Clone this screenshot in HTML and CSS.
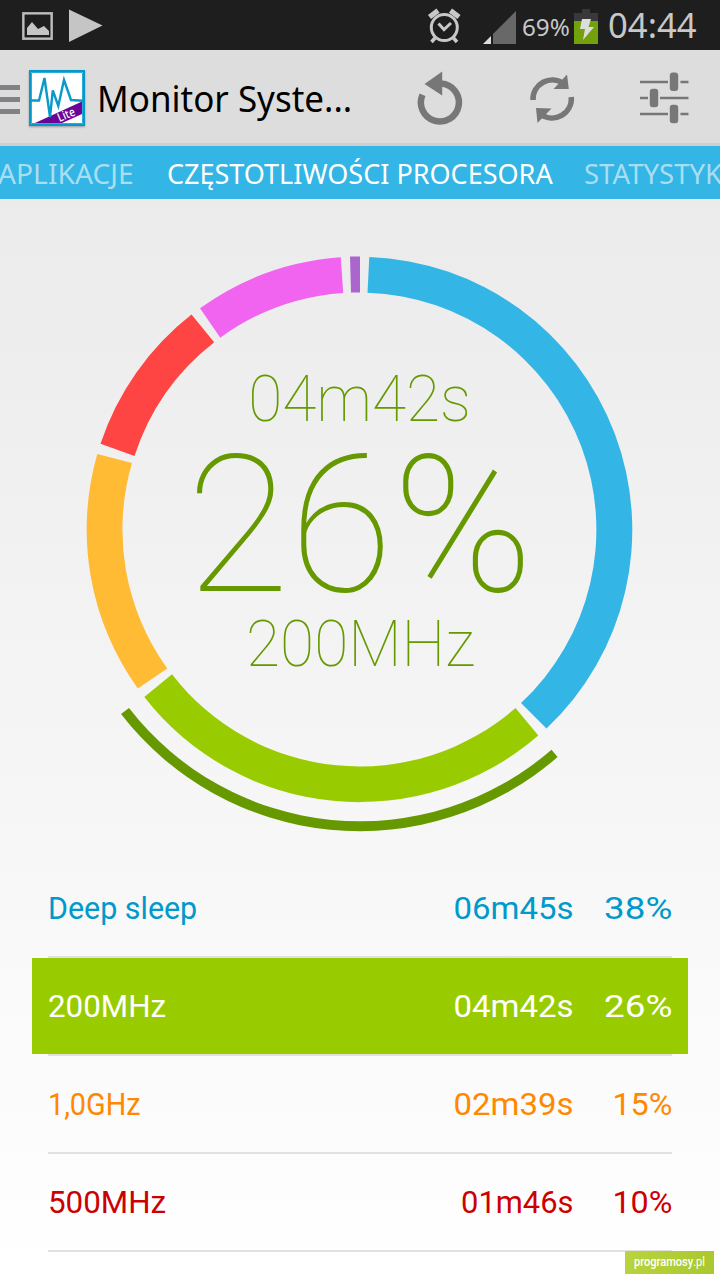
FILE: index.html
```html
<!DOCTYPE html>
<html lang="pl">
<head>
<meta charset="utf-8">
<title>Monitor Systemu</title>
<link rel="stylesheet" href="styles.css">
</head>
<body>
<div class="screen">
  <header class="status">
    <svg class="notices" width="110" height="50" viewBox="0 0 110 50">
      <rect x="23" y="13" width="29" height="26" fill="none" stroke="#aaa" stroke-width="2"/>
      <rect x="24" y="14" width="27" height="24" fill="none" stroke="#d0d0d0" stroke-width="1"/>
      <path d="M27 35V28l5-6 6 7 6-3 5 5v4z" fill="#c5c5c5"/>
      <path d="M69 9.500L102.500 25.500 69 42z" fill="#c5c5c5"/>
    </svg>
    <svg class="signals" width="92" height="50" viewBox="0 0 92 50">
      <g fill="none" stroke="#c8c8c8">
        <circle cx="17.300" cy="27.500" r="13" stroke-width="3"/>
        <path d="M11.500 23.500l5.500 6 7-6.500" stroke-width="3"/>
        <path d="M2.500 17l8.500-6.300M32 17l-8.500-6.300" stroke-width="5.200"/>
        <path d="M8 38l-3.500 4M26.500 38l3.500 4" stroke-width="3.500"/>
      </g>
      <path d="M56 44l8-8v8z" fill="#ddd"/>
      <path d="M66 44V34L89 11v33z" fill="#686868"/>
    </svg>
    <span class="percent"><span class="fit fit-percent">69%</span></span>
    <svg class="battery" width="24" height="50" viewBox="0 0 24 50">
      <path d="M0 13h8V9h8v4h8v8H0z" fill="#393939"/>
      <path d="M0 21h24v23H0z" fill="#73a10c"/>
      <path d="M8 19h9l-2.500 8H20L9 40l2-11H6z" fill="#ddd"/>
    </svg>
    <span class="clock"><span class="fit fit-clock">04:44</span></span>
  </header>

  <div class="actionbar">
    <svg width="20" height="93" viewBox="0 0 20 93"><path d="M0 35h20v5H0zM0 47h20v5H0zM0 59h20v5H0z" fill="#808286"/></svg>
    <svg class="logo" width="56" height="56" viewBox="0 0 56 56">
      <rect x="1" y="1" width="54" height="54" fill="#fff" stroke="#0798cb" stroke-width="2"/>
      <path d="M2.500 2.500h51v51h-51z" fill="none" stroke="#2bacdb" stroke-width="1"/>
      <path d="M6 53L53 31.500V44L33 53z" fill="#6a0496"/>
      <path d="M2 30.500h8L15.500 8l5.500 39 2.800-26.500L29.300 36 35 10l7 20 12 .700" fill="none" stroke="#079acb" stroke-width="2.400"/>
      <text class="lite" x="0" y="0" textLength="18" lengthAdjust="spacingAndGlyphs" transform="translate(30.500 52) rotate(-23)">Lite</text>
    </svg>
    <h1 class="title"><span class="fit fit-title">Monitor Syste...</span></h1>
    <svg class="actions" width="304" height="93" viewBox="416 50 304 93">
      <g fill="#777">
        <path d="M424.500 84L442.200 71.500V95.500z"/>
        <path d="M441 83.500A19 19 0 1 1 422.500 94.800" fill="none" stroke="#777" stroke-width="6.500"/>
        <path d="M533 100A19.300 19.300 0 0 1 563.500 83.500" fill="none" stroke="#777" stroke-width="5.500"/>
        <path d="M567 74.500l1.800 14.500H553.500z"/>
        <path d="M571.300 97A19.300 19.300 0 0 1 541 114.500" fill="none" stroke="#777" stroke-width="5.500"/>
        <path d="M536 108l15.500.500L537.500 123z"/>
        <path d="M640 80.700h28v2.600h-28zM680.500 80.700h8v2.600h-8zM640 96.700h8v2.600h-8zM660 96.700h28.500v2.600H660zM640 112.700h28v2.600h-28zM680.500 112.700h8v2.600h-8z"/>
        <rect x="669.800" y="72.500" width="8.400" height="18.500" rx="3"/>
        <rect x="649.800" y="88.700" width="8.400" height="18.500" rx="3"/>
        <rect x="669.800" y="104.800" width="8.400" height="18.500" rx="3"/>
      </g>
    </svg>
  </div>

  <nav class="tabs">
    <span class="tab tab-prev"><span class="fit fit-prev">APLIKACJE</span></span>
    <span class="tab tab-current"><span class="fit fit-current">CZĘSTOTLIWOŚCI PROCESORA</span></span>
    <span class="tab tab-next"><span class="fit fit-next">STATYSTYKI</span></span>
  </nav>

  <main class="content">
    <svg class="chart" width="720" height="661" viewBox="0 199 720 661">
      <path fill="#33b5e5" d="M369.300 257A273 273 0 0 1 546.500 728.500L521 703A237 237 0 0 0 367.500 292.800z"/>
      <path fill="#99cc00" d="M538.300 735.500A273 273 0 0 1 144.300 697L172 674.300A237 237 0 0 0 515.500 708z"/>
      <path fill="#ffbb33" d="M137.800 688.500A273 273 0 0 1 97.300 454L132 463A237 237 0 0 0 167.300 668.500z"/>
      <path fill="#ff4444" d="M100.500 443.800A273 273 0 0 1 191.500 314.500L214.200 342.300A237 237 0 0 0 134.500 456z"/>
      <path fill="#f064f0" d="M200 308.300A273 273 0 0 1 340.800 257.200L343.200 292.900A237 237 0 0 0 220.300 337.700z"/>
      <path fill="#aa66cc" d="M350 256.500h10v36h-9z"/>
      <path fill="#669900" d="M557.600 757A301.500 301.500 0 0 1 121 714L129 708A292 292 0 0 0 551.500 749.700z"/>
      <g class="reading" fill="#669900">
        <text transform="translate(359.600 421) scale(.972 1)" font-size="64">04m42s</text>
        <text transform="translate(359.800 590.700) scale(.982 1)" font-size="192">26%</text>
        <text transform="translate(360.500 666) scale(.972 1)" font-size="64">200MHz</text>
      </g>
    </svg>

    <ul class="list">
      <li class="row blue"><span class="name"><span class="fit n1">Deep sleep</span></span><span class="time"><span class="fit t1">06m45s</span></span><span class="share"><span class="fit s1">38%</span></span></li>
      <li class="row selected"><span class="name"><span class="fit n2">200MHz</span></span><span class="time"><span class="fit t1">04m42s</span></span><span class="share"><span class="fit s1">26%</span></span></li>
      <li class="row orange"><span class="name"><span class="fit n3">1,0GHz</span></span><span class="time"><span class="fit t1">02m39s</span></span><span class="share"><span class="fit s2">15%</span></span></li>
      <li class="row red"><span class="name"><span class="fit n2">500MHz</span></span><span class="time"><span class="fit t2">01m46s</span></span><span class="share"><span class="fit s2">10%</span></span></li>
    </ul>
  </main>
  <div class="watermark"><span class="fit fit-mark"><b>programosy</b>.pl</span></div>
</div>
</body>
</html>
```
FILE: styles.css
```css
* { box-sizing: border-box; }
body { margin: 0; }
svg { display: block; flex: none; }
.fit { display: inline-block; white-space: nowrap; transform-origin: left center; }

.screen {
  position: relative;
  width: 720px;
  height: 1280px;
  overflow: hidden;
  font-family: "Noto Sans", sans-serif;
  background: #fff;
}

.status { display: flex; height: 50px; background: #1e1e1e; color: #c8c8c8; }
.signals { margin-left: 317px; }
.percent { width: 55px; padding-left: 3px; font-size: 24px; line-height: 53px; }
.clock { flex: 1; padding-left: 10px; font-size: 34px; line-height: 50px; }
.fit-percent { transform: scaleX(1.01); }
.fit-clock { transform: scaleX(1.02); }

.actionbar { display: flex; height: 96px; background: #ddd; border-bottom: 3px solid #cfcfcf; }
.logo { margin: 20px 0 0 9px; box-shadow: 0 1px 2px #999; }
.lite { font-family: "Noto Sans", sans-serif; font-size: 12px; font-weight: 500; fill: #fff; }
.title { width: 318px; margin: 0; padding-left: 12px; font-size: 36px; font-weight: 400; line-height: 98px; color: #000; }
.fit-title { transform: scaleX(.972); }
.actions { margin-left: 13px; }

.tabs { display: flex; height: 53px; background: #33b5e5; color: #a9def2; font-size: 27px; line-height: 55px; }
.tab { flex: none; }
.tab-prev { width: 168px; margin-left: -2px; }
.tab-current { width: 418px; padding-left: 1px; color: #fff; }
.fit-prev { transform: scaleX(1.045); }
.fit-next { transform: scaleX(1.02); }

.content { background: linear-gradient(#ebebeb, #fff); height: 1081px; }
.reading { font-family: Roboto, sans-serif; font-weight: 100; text-anchor: middle; }

.list { margin: 0; padding: 0 48px; list-style: none; }
.row {
  display: flex;
  height: 98px;
  border-bottom: 2px solid #e1e1e1;
  font-family: Roboto, sans-serif;
  font-size: 32px;
  font-weight: 400;
  line-height: 97px;
}
.name { flex: 1; }
.time, .share { text-align: right; }
.share { width: 98px; }
.time .fit, .share .fit { transform-origin: right center; }
.n1 { transform: scaleX(.95); }
.n2 { transform: scaleX(.98); }
.n3 { transform: scaleX(.9); }
.t1 { transform: scaleX(1.03); }
.t2 { transform: scaleX(.965); }
.s1 { transform: scaleX(1.15); }
.s2 { transform: scaleX(1.01); }
.blue { color: #0099cc; }
.orange { color: #ff8800; }
.red { color: #cc0000; }
.selected { position: relative; z-index: 0; color: #fff; }
.selected::before { content: ""; position: absolute; inset: 0 -16px; background: #99cc00; z-index: -1; }

.watermark {
  position: absolute;
  left: 625px;
  top: 1251px;
  width: 89px;
  height: 23px;
  padding-left: 9px;
  background: linear-gradient(100deg, #b9d43e, #a9c82e);
  color: #fff;
  font: 13px/22px Roboto, sans-serif;
}
.watermark b { font-weight: 500; }
.fit-mark { transform: scaleX(.85); }
```
